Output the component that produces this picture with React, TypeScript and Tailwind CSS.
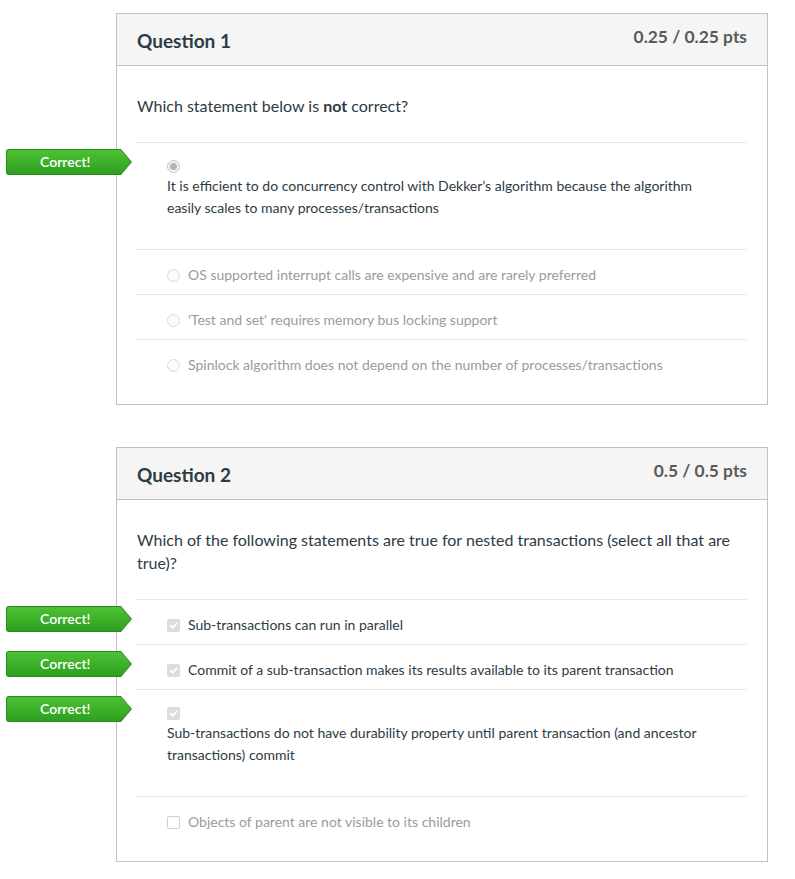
import React from 'react';

type Answer = { text: string; correct?: boolean; stacked?: boolean };

type Question = {
  title: string;
  points: string;
  prompt: React.ReactNode;
  kind: 'radio' | 'checkbox';
  answers: Answer[];
};

const questions: Question[] = [
  {
    title: 'Question 1',
    points: '0.25 / 0.25 pts',
    prompt: (
      <>
        Which statement below is <strong className="font-bold">not</strong> correct?
      </>
    ),
    kind: 'radio',
    answers: [
      {
        text: 'It is efficient to do concurrency control with Dekker’s algorithm because the algorithm easily scales to many processes/transactions',
        correct: true,
        stacked: true
      },
      { text: 'OS supported interrupt calls are expensive and are rarely preferred' },
      { text: "'Test and set' requires memory bus locking support" },
      { text: 'Spinlock algorithm does not depend on the number of processes/transactions' }
    ]
  },
  {
    title: 'Question 2',
    points: '0.5 / 0.5 pts',
    prompt: 'Which of the following statements are true for nested transactions (select all that are true)?',
    kind: 'checkbox',
    answers: [
      { text: 'Sub-transactions can run in parallel', correct: true },
      { text: 'Commit of a sub-transaction makes its results available to its parent transaction', correct: true },
      {
        text: 'Sub-transactions do not have durability property until parent transaction (and ancestor transactions) commit',
        correct: true,
        stacked: true
      },
      { text: 'Objects of parent are not visible to its children' }
    ]
  }
];

const CorrectFlag = () => (
  <div className="absolute left-[-131px] top-[6px] h-[26px] w-[126px] bg-[#2b8a1e] [clip-path:polygon(0_0,calc(100%_-_11px)_0,100%_50%,calc(100%_-_11px)_100%,0_100%)] rounded-l-[3px]">
    <div className="absolute inset-[1px] flex items-center pl-[33px] bg-linear-to-b from-[#4cc234] to-[#2e9f1f] [clip-path:polygon(0_0,calc(100%_-_10px)_0,100%_50%,calc(100%_-_10px)_100%,0_100%)] rounded-l-[2px]">
      <span className="text-[14px] font-semibold text-white leading-none">Correct!</span>
    </div>
  </div>
);

const Mark = ({ kind, checked }: { kind: 'radio' | 'checkbox'; checked: boolean }) => {
  if (kind === 'radio') {
    return (
      <span className={`inline-flex shrink-0 w-[13px] h-[13px] rounded-full border items-center justify-center ${checked ? 'border-[#c4c4c4] bg-[#f3f3f3]' : 'border-[#dadada] bg-[#fbfbfb]'}`}>
        {checked && <span className="w-[7px] h-[7px] rounded-full bg-[#b5b5b5]" />}
      </span>
    );
  }
  return (
    <span className={`inline-flex shrink-0 w-[13px] h-[13px] rounded-[2px] items-center justify-center ${checked ? 'bg-[#dcdcdc]' : 'border border-[#d2d2d2] bg-white'}`}>
      {checked && (
        <svg width="9" height="9" viewBox="0 0 10 10" fill="none">
          <path d="M1.5 5.2 L4 7.6 L8.6 2.4" stroke="#fff" strokeWidth="1.8" strokeLinecap="round" strokeLinejoin="round" />
        </svg>
      )}
    </span>
  );
};

const QuestionCard = ({ q }: { q: Question }) => (
  <div className="border border-[#c1c1c1] bg-white">
    <div className="h-[52px] bg-[#f5f5f5] border-b border-[#c1c1c1] px-5 flex justify-between items-start">
      <h2 className="pt-[14px] text-[19px] leading-[26px] font-bold text-[#2d3b45]">{q.title}</h2>
      <div className="pt-[12px] text-[17.4px] leading-[22px] font-bold text-[#5a5a5a]">{q.points}</div>
    </div>
    <div className="px-5 pt-[28px] pb-[20px]">
      <div className="text-[16px] leading-[23px] text-[#2d3b45] pb-[25px]">{q.prompt}</div>
      {q.answers.map((a, i) =>
        a.stacked ? (
          <div key={i} className="relative border-t border-[#e6e6e6] pl-[30px] pt-[14px] pb-[30px]">
            {a.correct && <CorrectFlag />}
            <div className="h-[18px] flex items-center">
              <Mark kind={q.kind} checked={!!a.correct} />
            </div>
            <div className="w-[545px] text-[14px] leading-[22px] text-[#2d3b45]">{a.text}</div>
          </div>
        ) : (
          <div key={i} className="relative border-t border-[#e6e6e6] pl-[30px] pt-[14px] pb-[8px] flex items-center gap-[8px]">
            {a.correct && <CorrectFlag />}
            <Mark kind={q.kind} checked={!!a.correct} />
            <span className={`text-[14px] leading-[22px] ${a.correct ? 'text-[#2d3b45]' : 'text-[#9b9b9b]'}`}>{a.text}</span>
          </div>
        )
      )}
    </div>
  </div>
);

export default function App() {
  return (
    <div className="min-h-screen bg-white font-['Lato',sans-serif] pt-[13px] pb-4">
      <div className="ml-[116px] w-[652px] flex flex-col gap-[42px]">
        {questions.map((q) => (
          <QuestionCard key={q.title} q={q} />
        ))}
      </div>
    </div>
  );
}
